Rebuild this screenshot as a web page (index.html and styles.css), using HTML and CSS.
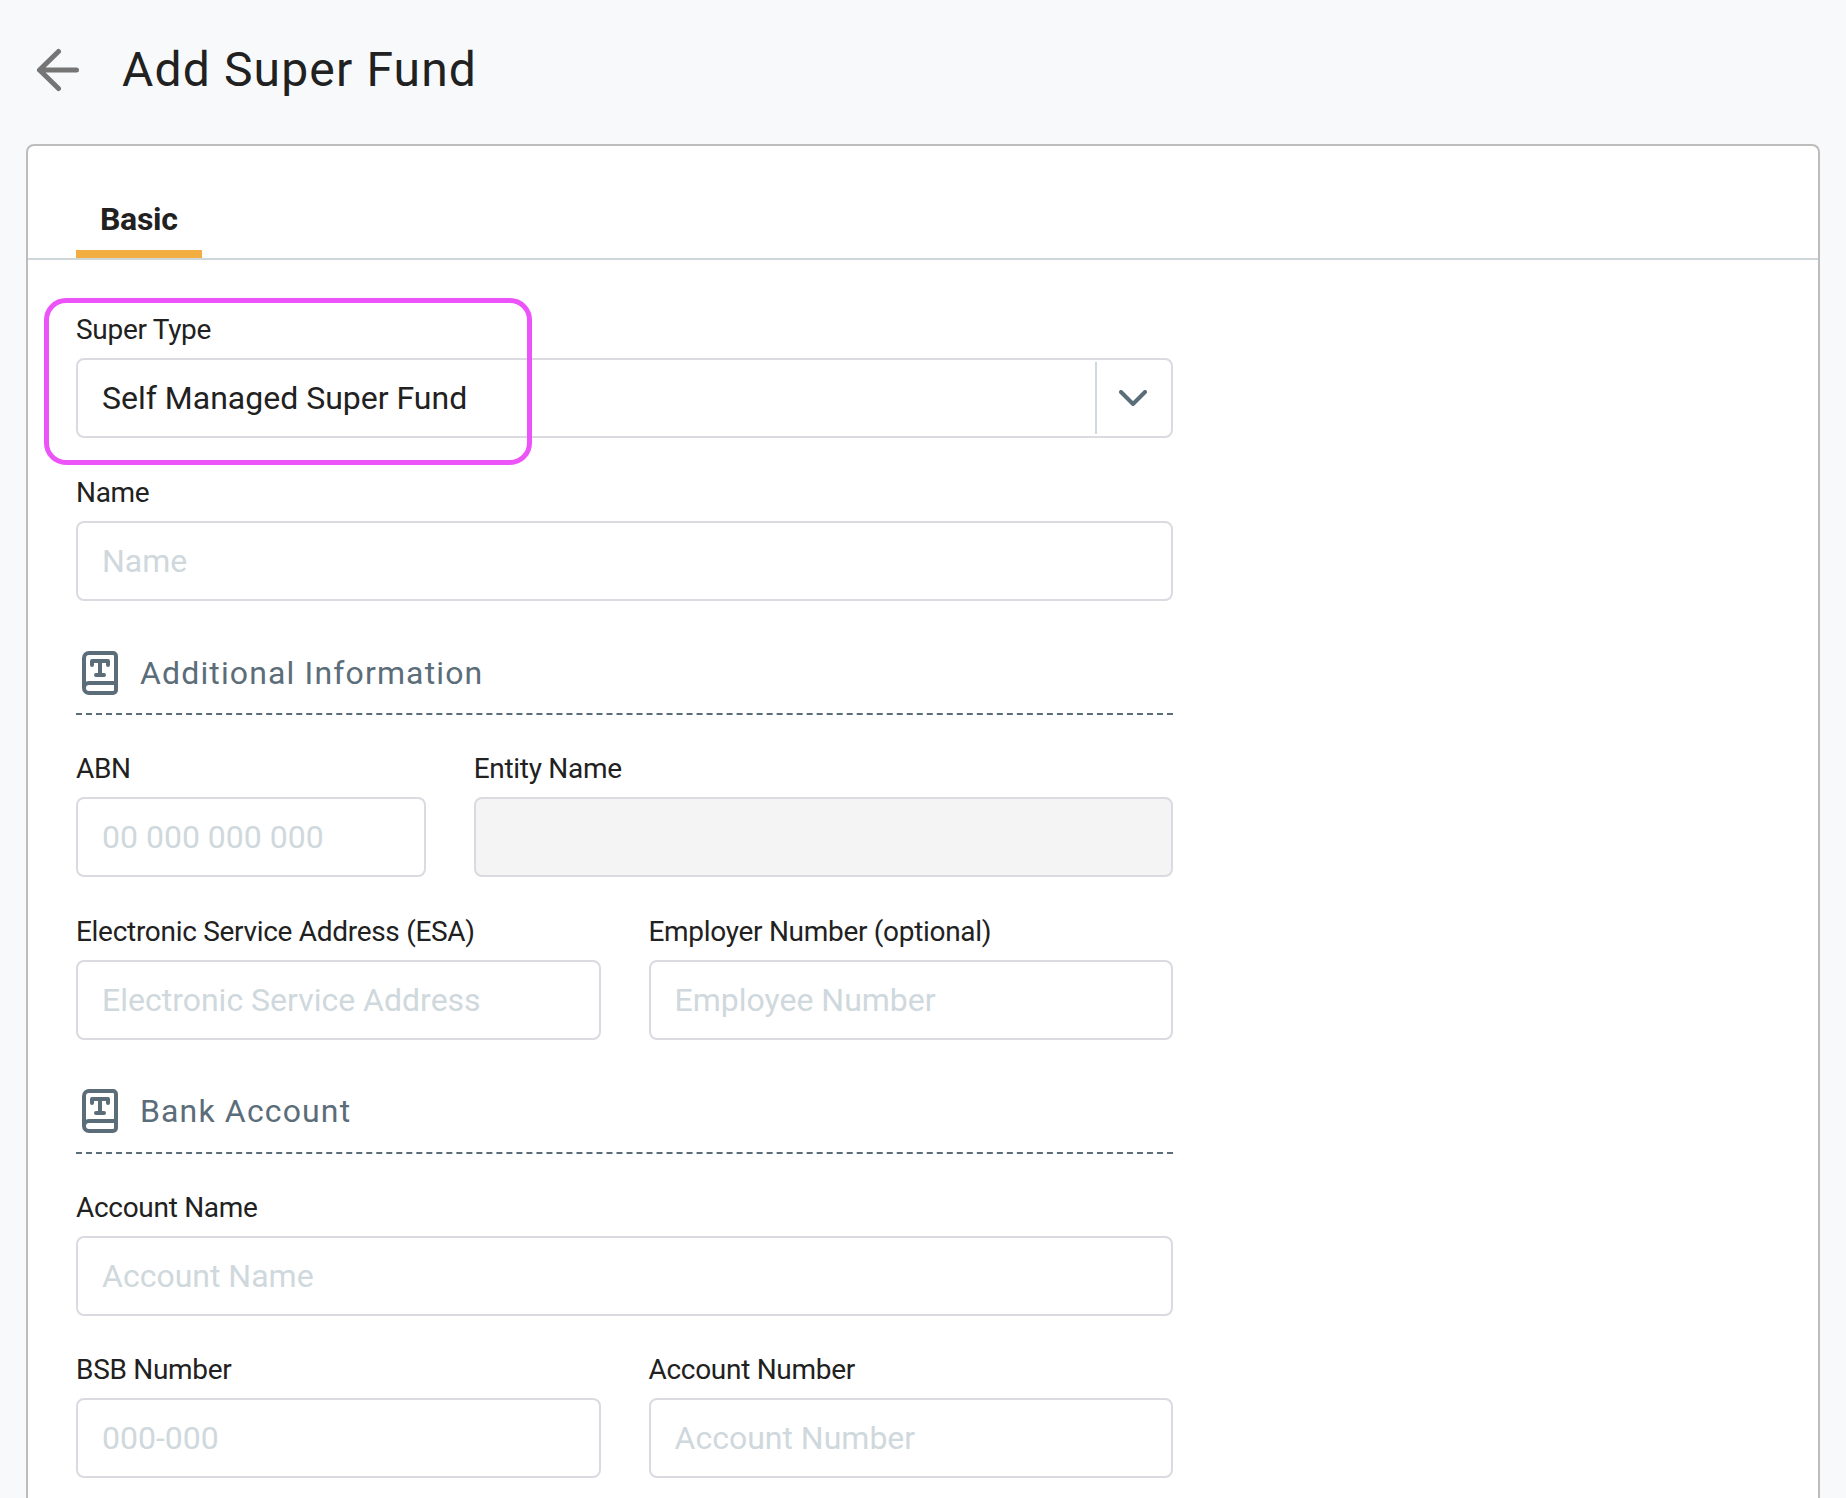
FILE: index.html
```
<!DOCTYPE html>
<html lang="en">
<head>
    <meta charset="UTF-8">
    <meta name="viewport" content="width=device-width, initial-scale=1.0">
    <title>Add Super Fund</title>
    <link rel="stylesheet" href="styles.css">
</head>
<body>
  <header class="page-header">
    <svg class="back-icon" viewBox="0 0 44 44" width="44" height="44">
      <path d="M22.500 3.500 3.500 22l19 18.500M3.500 22h37"/>
    </svg>
    <h1>Add Super Fund</h1>
  </header>
  <main class="card">
    <nav class="tabs">
      <a class="tab active">Basic</a>
    </nav>
    <form class="form">
      <div class="field highlighted">
        <label>Super Type</label>
        <div class="select">
          <span class="select-value">Self Managed Super Fund</span>
          <span class="select-arrow">
            <svg viewBox="0 0 28 16" width="28" height="16"><path d="M2 2l12 12L26 2"/></svg>
          </span>
        </div>
        <div class="highlight"></div>
      </div>
      <div class="field">
        <label for="name">Name</label>
        <input id="name" type="text" placeholder="Name">
      </div>
      <h2 class="section">
        <svg class="book-icon" viewBox="0 0 36 44" width="36" height="44">
          <path d="M2 37V7a5 5 0 0 1 5-5h24a3 3 0 0 1 3 3v34a3 3 0 0 1-3 3H7a5 5 0 0 1-5-5a5 5 0 0 1 5-5h27"/>
          <path d="M10 14v-4h16v4M18 10v14M14 24h8"/>
        </svg>
        Additional Information
      </h2>
      <div class="row">
        <div class="field">
          <label for="abn">ABN</label>
          <input id="abn" type="text" placeholder="00 000 000 000">
        </div>
        <div class="field wide">
          <label for="entity">Entity Name</label>
          <input id="entity" type="text" disabled>
        </div>
      </div>
      <div class="row">
        <div class="field">
          <label for="esa">Electronic Service Address (ESA)</label>
          <input id="esa" type="text" placeholder="Electronic Service Address">
        </div>
        <div class="field">
          <label for="employer">Employer Number (optional)</label>
          <input id="employer" type="text" placeholder="Employee Number">
        </div>
      </div>
      <h2 class="section">
        <svg class="book-icon" viewBox="0 0 36 44" width="36" height="44">
          <path d="M2 37V7a5 5 0 0 1 5-5h24a3 3 0 0 1 3 3v34a3 3 0 0 1-3 3H7a5 5 0 0 1-5-5a5 5 0 0 1 5-5h27"/>
          <path d="M10 14v-4h16v4M18 10v14M14 24h8"/>
        </svg>
        Bank Account
      </h2>
      <div class="field">
        <label for="account-name">Account Name</label>
        <input id="account-name" type="text" placeholder="Account Name">
      </div>
      <div class="row">
        <div class="field">
          <label for="bsb">BSB Number</label>
          <input id="bsb" type="text" placeholder="000-000">
        </div>
        <div class="field">
          <label for="account-number">Account Number</label>
          <input id="account-number" type="text" placeholder="Account Number">
        </div>
      </div>
    </form>
  </main>
</body>
</html>
```

FILE: styles.css
```
* {
    box-sizing: border-box;
}
body {
    margin: 0;
    height: 100vh;
    overflow: hidden;
    display: flex;
    flex-direction: column;
    font-family: Roboto, sans-serif;
    color: #212121;
    background-color: #f8f9fb;
}
svg {
    display: block;
    fill: none;
    stroke: currentColor;
    stroke-width: 4;
    stroke-linecap: round;
    stroke-linejoin: round;
}
.page-header {
    display: flex;
    align-items: center;
    flex: none;
    height: 144px;
    padding: 0 0 4px 36px;
}
.back-icon {
    color: #757575;
    stroke-width: 5;
}
h1 {
    margin: 0 0 0 42px;
    font-size: 48px;
    font-weight: 400;
    line-height: 56px;
    letter-spacing: 1.15px;
}
.card {
    flex: 1;
    margin: 0 26px;
    background-color: #fff;
    border: 2px solid #bdbdbd;
    border-bottom: none;
    border-radius: 8px 8px 0 0;
}
.tabs {
    display: flex;
    align-items: flex-end;
    height: 114px;
    padding-left: 48px;
    border-bottom: 2px solid #d0d7db;
}
.tab {
    padding: 0 24px 13px;
    font-size: 32px;
    font-weight: 700;
    line-height: 36px;
    letter-spacing: -0.3px;
}
.tab.active {
    border-bottom: 8px solid #f2ae40;
}
.form {
    display: flex;
    flex-direction: column;
    gap: 38.3px;
    width: 1145px;
    padding: 54.4px 0 0 48px;
}
.row {
    display: flex;
    gap: 48px;
}
.field {
    flex: 1;
    min-width: 0;
}
.field.wide {
    flex: 2;
}
label {
    display: block;
    margin-bottom: 12.8px;
    font-size: 28px;
    line-height: 31.2px;
    letter-spacing: -0.3px;
}
input,
.select {
    display: block;
    width: 100%;
    height: 80px;
    padding: 0 24px;
    font: 32px Roboto, sans-serif;
    color: #212121;
    background-color: #fff;
    border: 2px solid #dadae0;
    border-radius: 8px;
}
input::placeholder {
    color: #cfd8dc;
}
input:disabled {
    background-color: #f4f4f4;
}
.select {
    display: flex;
    align-items: center;
    justify-content: space-between;
    padding-right: 0;
}
.select-arrow {
    display: flex;
    align-items: center;
    justify-content: center;
    width: 76px;
    height: 72px;
    padding-right: 2px;
    color: #5b6d79;
    border-left: 2px solid #cfd8dc;
}
.highlighted {
    position: relative;
}
.highlight {
    position: absolute;
    top: -16px;
    left: -32px;
    width: 488px;
    height: 167px;
    border: 5px solid #ec53f8;
    border-radius: 22px;
}
.section {
    display: flex;
    align-items: center;
    gap: 22px;
    height: 75.95px;
    margin: 0;
    padding: 0 0 6.8px 6px;
    font-size: 32px;
    font-weight: 400;
    letter-spacing: 1.14px;
    color: #5b6d79;
    border-bottom: 2px dashed #5b6d79;
}
```
